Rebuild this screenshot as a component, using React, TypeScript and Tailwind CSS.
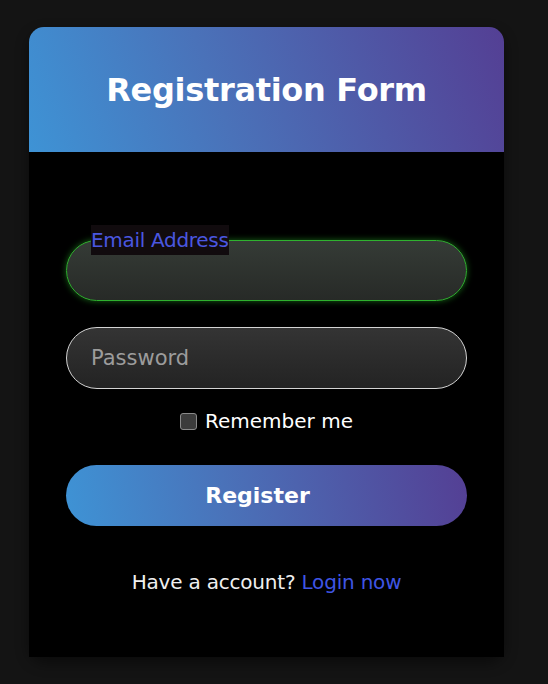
import React from 'react';

export default function App() {
  return (
    <div className="min-h-screen bg-[#141414] pt-[27px] pl-[29px]" style={{ fontFamily: '"DejaVu Sans", sans-serif' }}>
      <div className="w-[475px] rounded-[16px] shadow-[0_6px_14px_rgba(0,0,0,0.45)]">
        <div className="h-[125px] rounded-t-[15px] bg-[linear-gradient(70deg,#3e93d5,#4a72b9_40%,#543f94)] flex items-center justify-center">
          <h1 className="text-[32px] font-bold text-white tracking-[-0.3px]">Registration Form</h1>
        </div>

        <div className="h-[505px] bg-black px-[37px] pt-[88px]">
          <div className="relative">
            <span className="absolute left-[25px] -top-[15px] h-[30px] leading-[30px] bg-[#110b0e] text-[#4a57e0] text-[20px] tracking-[-0.3px]">
              Email Address
            </span>
            <input
              type="email"
              className="w-full h-[61px] rounded-full border border-[#2fb22f] bg-[linear-gradient(to_bottom,#353b36,#272a27)] shadow-[0_0_6px_rgba(40,180,40,0.55)] px-[25px] text-white text-[20px] outline-none"
            />
          </div>

          <input
            type="password"
            placeholder="Password"
            className="mt-[26px] w-full h-[62px] rounded-full border border-[#d4d4d4] bg-[linear-gradient(to_bottom,#343434,#232323)] px-[24px] text-white text-[21px] placeholder:text-[#9c9c9c] outline-none"
          />

          <label className="mt-[20px] flex items-center justify-center gap-[8px] text-white text-[20px] h-[24px]">
            <span className="w-[17px] h-[17px] rounded-[3px] border border-[#8a8a8a] bg-[#3c3c3c]" />
            Remember me
          </label>

          <button className="mt-[32px] w-full h-[61px] rounded-full bg-[linear-gradient(80deg,#3e93d5,#4a72b9_40%,#543f94)] text-white text-[22px] font-bold pr-[18px]">
            Register
          </button>

          <p className="mt-[41px] text-center text-[20px] text-[#f0f0f0] tracking-[-0.2px]">
            Have a account? <span className="text-[#3f55e4]">Login now</span>
          </p>
        </div>
      </div>
    </div>
  );
}
